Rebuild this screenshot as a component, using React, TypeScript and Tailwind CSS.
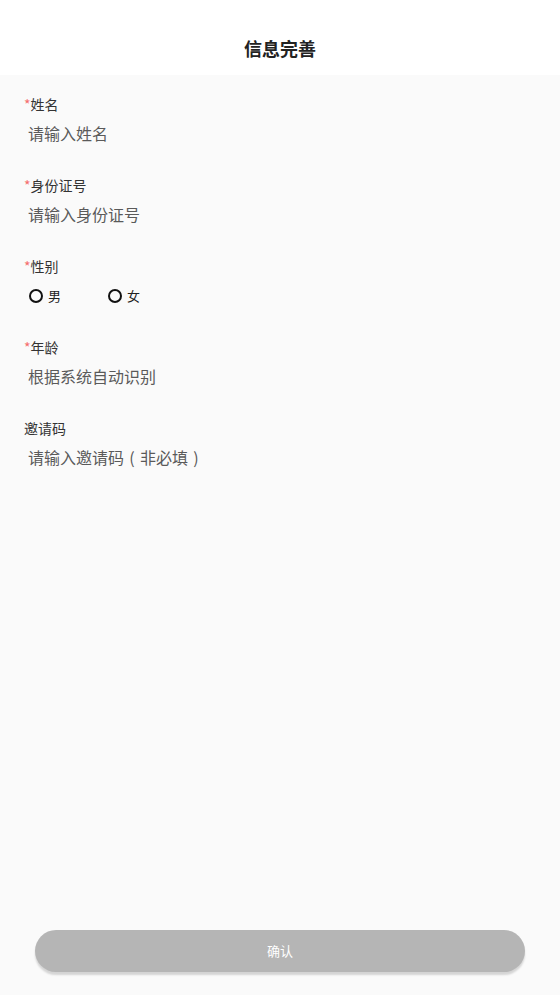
import React from "react";

const font = { fontFamily: '"Noto Sans CJK SC", "Noto Sans", sans-serif' };

function Label({ text, required }: { text: string; required?: boolean }) {
  return (
    <div className="h-[20px] text-[14px] leading-[20px] text-[#333333] flex items-center">
      {required && <span className="text-[#f56c6c]">*</span>}
      <span>{text}</span>
    </div>
  );
}

function Field({ label, placeholder, required }: { label: string; placeholder: React.ReactNode; required?: boolean }) {
  return (
    <div className="mb-[30px]">
      <Label text={label} required={required} />
      <div className="mt-[7px] h-[24px] pl-[4px] text-[16px] leading-[24px] text-[#5a5a5a]">{placeholder}</div>
    </div>
  );
}

function Radio({ text }: { text: string }) {
  return (
    <div className="flex items-center gap-[5px]">
      <span className="w-[14px] h-[14px] rounded-full border-[2.5px] border-[#111111] box-border" />
      <span className="text-[13px] leading-[24px] text-[#222222]">{text}</span>
    </div>
  );
}

export default function App() {
  return (
    <div className="w-[560px] h-[995px] bg-[#fafafa] flex flex-col" style={font}>
      <div className="h-[75px] bg-white flex justify-center pt-[35px]">
        <span className="text-[18px] leading-[26px] font-bold text-[#222222]">信息完善</span>
      </div>
      <div className="px-[24px] pt-[19px]">
        <Field label="姓名" placeholder="请输入姓名" required />
        <Field label="身份证号" placeholder="请输入身份证号" required />
        <div className="mb-[29px]">
          <Label text="性别" required />
          <div className="mt-[8px] h-[24px] pl-[5px] flex items-center gap-[47px]">
            <Radio text="男" />
            <Radio text="女" />
          </div>
        </div>
        <Field label="年龄" placeholder="根据系统自动识别" required />
        <Field
          label="邀请码"
          placeholder={
            <>
              请输入邀请码
              <span className="inline-block w-[16px] text-center">(</span>
              非必填
              <span className="inline-block w-[16px] text-center">)</span>
            </>
          }
        />
      </div>
      <div className="flex-1" />
      <div className="px-[35px] mb-[23px]">
        <button className="w-full h-[42px] rounded-full bg-[#b5b5b5] text-white text-[13px] shadow-[0_3px_2px_rgba(0,0,0,0.15)]">
          确认
        </button>
      </div>
    </div>
  );
}
